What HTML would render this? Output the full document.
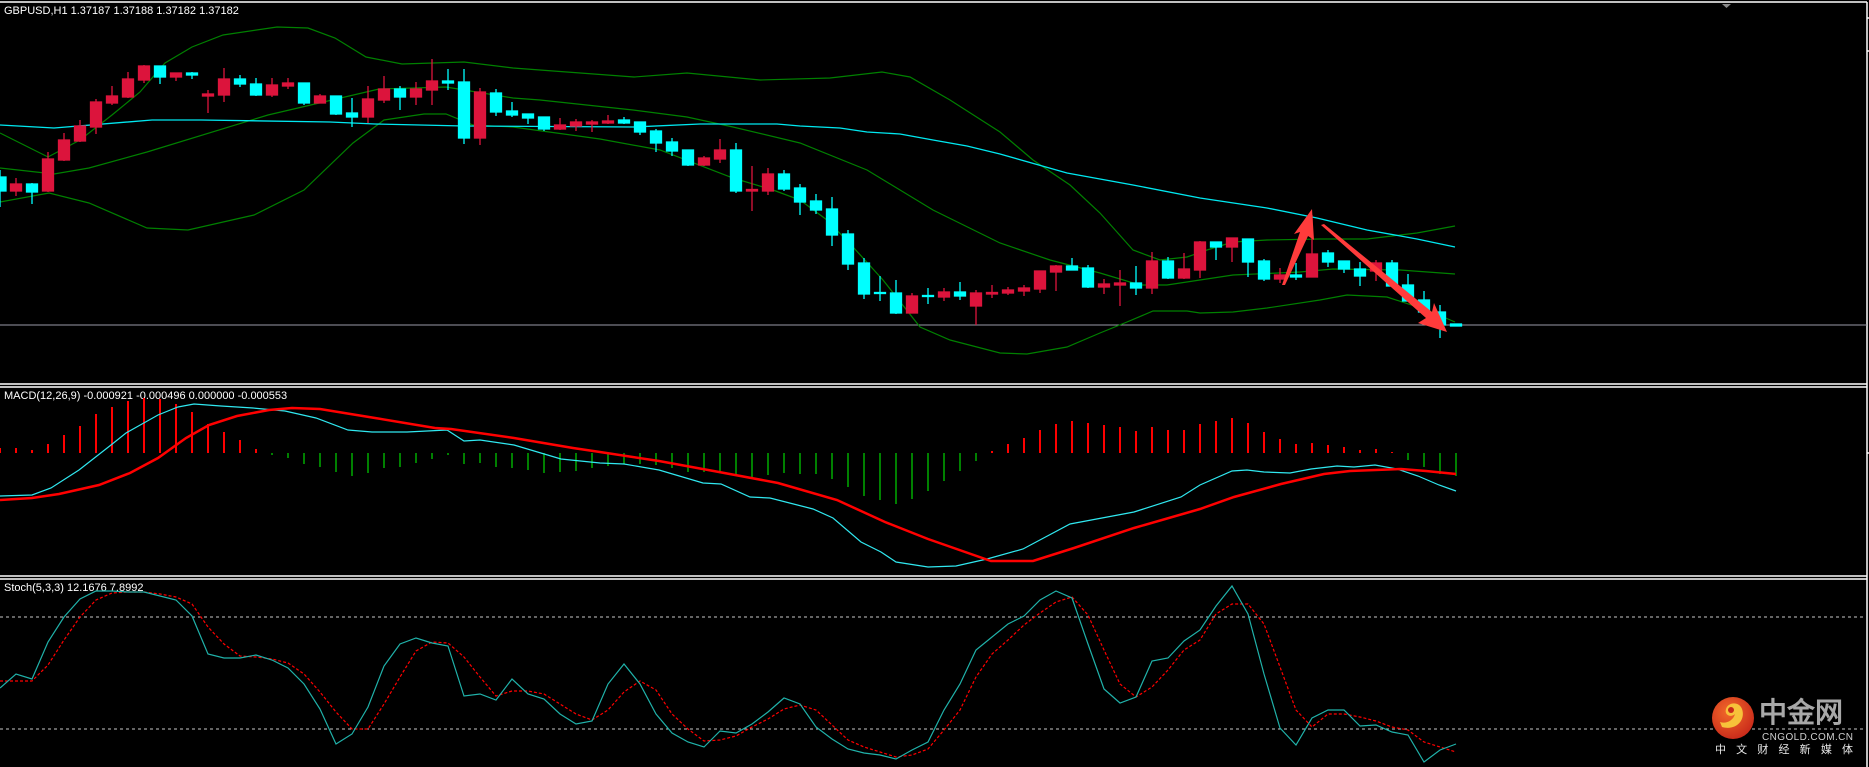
<!DOCTYPE html>
<html><head><meta charset="utf-8"><style>
html,body{margin:0;padding:0;background:#000;}
svg{display:block;}
text{font-family:"Liberation Sans",sans-serif;}
</style></head><body>
<svg width="1869" height="767" viewBox="0 0 1869 767" xmlns="http://www.w3.org/2000/svg">
<rect width="1869" height="767" fill="#000"/>
<g stroke="#fff" stroke-width="1.5" fill="none">
<line x1="0" y1="2" x2="1867" y2="2"/>
<line x1="1867" y1="2" x2="1867" y2="767"/>
<line x1="0" y1="384" x2="1867" y2="384"/>
<line x1="0" y1="387" x2="1867" y2="387"/>
<line x1="0" y1="576" x2="1867" y2="576"/>
<line x1="0" y1="579" x2="1867" y2="579"/>
<line x1="1867" y1="18" x2="1869" y2="18"/>
<line x1="1867" y1="51" x2="1869" y2="51"/>
<line x1="1867" y1="453" x2="1869" y2="453"/>
</g>
<polygon points="1722,4 1731,4 1726.5,8" fill="#888"/>
<text x="4" y="14" font-size="11" fill="#fff">GBPUSD,H1  1.37187 1.37188 1.37182 1.37182</text>
<line x1="0" y1="325" x2="1867" y2="325" stroke="#9a9aa8" stroke-width="1"/>
<g fill="none" stroke="#008000" stroke-width="1.2">
<polyline points="0,133 48,157 80,140 112,115 140,92 165,63 192,47 223,35 277,27 308,28 335,38 366,57 402,64 464,62 513,68 634,77 687,73 760,80 830,78 882,72 910,77 950,100 1000,132 1033,160 1070,185 1100,213 1133,250 1160,260 1187,257 1207,250 1233,242 1267,240 1320,239 1367,239 1417,233 1455,226"/>
<polyline points="0,168 54,174 89,168 147,152 268,115 379,89 446,87 513,98 540,100 633,110 687,117 733,127 800,143 867,170 933,210 1000,243 1050,260 1100,273 1140,285 1167,285 1200,280 1233,275 1300,272 1333,269 1400,270 1455,274"/>
<polyline points="0,202 49,193 89,203 147,228 188,230 254,215 304,190 353,143 384,120 424,114 446,114 473,125 513,127 600,139 660,150 733,178 773,190 800,200 827,220 853,247 883,280 920,327 950,340 1000,353 1027,354 1067,347 1100,333 1127,322 1153,311 1187,311 1200,313 1233,312 1267,308 1320,300 1347,295 1387,297 1427,310 1455,322"/>
</g>
<polyline fill="none" stroke="#00e8f0" stroke-width="1.3" points="0,125 54,128 152,120 201,120 330,122 375,124 464,126 634,127 700,124 777,124 800,126 840,128 867,132 900,134 933,140 967,146 1000,154 1067,173 1133,185 1200,198 1267,208 1317,218 1367,230 1417,239 1455,247"/>
<g stroke-width="1.3">
<g stroke="#00ffff" fill="#00ffff">
<line x1="0" y1="170" x2="0" y2="207"/><rect x="-5" y="177" width="11" height="14"/>
<line x1="32" y1="183" x2="32" y2="204"/><rect x="26.5" y="184" width="11" height="8"/>
<line x1="160" y1="66" x2="160" y2="84"/><rect x="154.5" y="66" width="11" height="11"/>
<line x1="192" y1="72" x2="192" y2="79"/><rect x="186.5" y="73" width="11" height="2"/>
<line x1="240" y1="75" x2="240" y2="87"/><rect x="234.5" y="79" width="11" height="5"/>
<line x1="256" y1="78" x2="256" y2="96"/><rect x="250.5" y="84" width="11" height="11"/>
<line x1="304" y1="83" x2="304" y2="105"/><rect x="298.5" y="83" width="11" height="20"/>
<line x1="336" y1="96" x2="336" y2="115"/><rect x="330.5" y="96" width="11" height="18"/>
<line x1="352" y1="98" x2="352" y2="127"/><rect x="346.5" y="113" width="11" height="4"/>
<line x1="400" y1="86" x2="400" y2="110"/><rect x="394.5" y="89" width="11" height="8"/>
<line x1="448" y1="69" x2="448" y2="90"/><rect x="442.5" y="81" width="11" height="2"/>
<line x1="464" y1="69" x2="464" y2="144"/><rect x="458.5" y="82" width="11" height="56"/>
<line x1="496" y1="89" x2="496" y2="116"/><rect x="490.5" y="93" width="11" height="19"/>
<line x1="512" y1="102" x2="512" y2="117"/><rect x="506.5" y="111" width="11" height="4"/>
<line x1="528" y1="114" x2="528" y2="124"/><rect x="522.5" y="114" width="11" height="4"/>
<line x1="544" y1="117" x2="544" y2="131"/><rect x="538.5" y="117" width="11" height="12"/>
<line x1="624" y1="117" x2="624" y2="124"/><rect x="618.5" y="120" width="11" height="3"/>
<line x1="640" y1="122" x2="640" y2="135"/><rect x="634.5" y="122" width="11" height="10"/>
<line x1="656" y1="129" x2="656" y2="152"/><rect x="650.5" y="131" width="11" height="12"/>
<line x1="672" y1="138" x2="672" y2="156"/><rect x="666.5" y="142" width="11" height="9"/>
<line x1="688" y1="150" x2="688" y2="166"/><rect x="682.5" y="150" width="11" height="15"/>
<line x1="736" y1="143" x2="736" y2="193"/><rect x="730.5" y="150" width="11" height="41"/>
<line x1="784" y1="170" x2="784" y2="191"/><rect x="778.5" y="174" width="11" height="15"/>
<line x1="800" y1="184" x2="800" y2="215"/><rect x="794.5" y="188" width="11" height="14"/>
<line x1="816" y1="194" x2="816" y2="214"/><rect x="810.5" y="201" width="11" height="9"/>
<line x1="832" y1="197" x2="832" y2="246"/><rect x="826.5" y="209" width="11" height="26"/>
<line x1="848" y1="230" x2="848" y2="270"/><rect x="842.5" y="234" width="11" height="30"/>
<line x1="864" y1="258" x2="864" y2="299"/><rect x="858.5" y="263" width="11" height="31"/>
<line x1="880" y1="276" x2="880" y2="301"/><rect x="874.5" y="292.5" width="11" height="1"/>
<line x1="896" y1="280" x2="896" y2="314"/><rect x="890.5" y="293" width="11" height="20"/>
<line x1="928" y1="288" x2="928" y2="304"/><rect x="922.5" y="295.5" width="11" height="1"/>
<line x1="960" y1="282" x2="960" y2="300"/><rect x="954.5" y="292" width="11" height="4"/>
<line x1="1072" y1="258" x2="1072" y2="270"/><rect x="1066.5" y="266" width="11" height="4"/>
<line x1="1088" y1="265" x2="1088" y2="288"/><rect x="1082.5" y="268" width="11" height="19"/>
<line x1="1136" y1="266" x2="1136" y2="295"/><rect x="1130.5" y="283" width="11" height="5"/>
<line x1="1168" y1="257" x2="1168" y2="279"/><rect x="1162.5" y="261" width="11" height="17"/>
<line x1="1216" y1="242" x2="1216" y2="260"/><rect x="1210.5" y="242" width="11" height="5"/>
<line x1="1248" y1="239" x2="1248" y2="277"/><rect x="1242.5" y="239" width="11" height="23"/>
<line x1="1264" y1="259" x2="1264" y2="281"/><rect x="1258.5" y="261" width="11" height="18"/>
<line x1="1296" y1="263" x2="1296" y2="280"/><rect x="1290.5" y="275" width="11" height="2"/>
<line x1="1328" y1="250" x2="1328" y2="267"/><rect x="1322.5" y="253" width="11" height="9"/>
<line x1="1344" y1="261" x2="1344" y2="273"/><rect x="1338.5" y="261" width="11" height="8"/>
<line x1="1360" y1="262" x2="1360" y2="286"/><rect x="1354.5" y="269" width="11" height="7"/>
<line x1="1392" y1="260" x2="1392" y2="286"/><rect x="1386.5" y="263" width="11" height="23"/>
<line x1="1408" y1="274" x2="1408" y2="301"/><rect x="1402.5" y="285" width="11" height="16"/>
<line x1="1424" y1="291" x2="1424" y2="312"/><rect x="1418.5" y="300" width="11" height="12"/>
<line x1="1440" y1="305" x2="1440" y2="338"/><rect x="1434.5" y="312" width="11" height="13"/>
<rect x="1450.5" y="324" width="11" height="2"/>
</g>
<g stroke="#dc143c" fill="#dc143c">
<line x1="16" y1="178" x2="16" y2="196"/><rect x="10.5" y="184" width="11" height="7"/>
<line x1="48" y1="152" x2="48" y2="192"/><rect x="42.5" y="159" width="11" height="32"/>
<line x1="64" y1="133" x2="64" y2="161"/><rect x="58.5" y="140" width="11" height="20"/>
<line x1="80" y1="120" x2="80" y2="142"/><rect x="74.5" y="126" width="11" height="15"/>
<line x1="96" y1="99" x2="96" y2="134"/><rect x="90.5" y="102" width="11" height="25"/>
<line x1="112" y1="86" x2="112" y2="105"/><rect x="106.5" y="96" width="11" height="7"/>
<line x1="128" y1="72" x2="128" y2="98"/><rect x="122.5" y="79" width="11" height="18"/>
<line x1="144" y1="65" x2="144" y2="83"/><rect x="138.5" y="66" width="11" height="14"/>
<line x1="176" y1="73" x2="176" y2="81"/><rect x="170.5" y="73" width="11" height="4"/>
<line x1="208" y1="90" x2="208" y2="113"/><rect x="202.5" y="94" width="11" height="2"/>
<line x1="224" y1="68" x2="224" y2="102"/><rect x="218.5" y="79" width="11" height="16"/>
<line x1="272" y1="78" x2="272" y2="97"/><rect x="266.5" y="85" width="11" height="10"/>
<line x1="288" y1="78" x2="288" y2="89"/><rect x="282.5" y="83" width="11" height="3"/>
<line x1="320" y1="94" x2="320" y2="103"/><rect x="314.5" y="96" width="11" height="7"/>
<line x1="368" y1="86" x2="368" y2="123"/><rect x="362.5" y="99" width="11" height="18"/>
<line x1="384" y1="76" x2="384" y2="103"/><rect x="378.5" y="89" width="11" height="11"/>
<line x1="416" y1="82" x2="416" y2="105"/><rect x="410.5" y="89" width="11" height="8"/>
<line x1="432" y1="59" x2="432" y2="105"/><rect x="426.5" y="81" width="11" height="9"/>
<line x1="480" y1="88" x2="480" y2="145"/><rect x="474.5" y="92" width="11" height="46"/>
<line x1="560" y1="118" x2="560" y2="130"/><rect x="554.5" y="125" width="11" height="4"/>
<line x1="576" y1="119" x2="576" y2="131"/><rect x="570.5" y="122" width="11" height="4"/>
<line x1="592" y1="120" x2="592" y2="132"/><rect x="586.5" y="122" width="11" height="2"/>
<line x1="608" y1="115" x2="608" y2="124"/><rect x="602.5" y="121" width="11" height="2"/>
<line x1="704" y1="156" x2="704" y2="166"/><rect x="698.5" y="158" width="11" height="7"/>
<line x1="720" y1="139" x2="720" y2="163"/><rect x="714.5" y="150" width="11" height="9"/>
<line x1="752" y1="166" x2="752" y2="211"/><rect x="746.5" y="189.5" width="11" height="1.5"/>
<line x1="768" y1="168" x2="768" y2="195"/><rect x="762.5" y="174" width="11" height="17"/>
<line x1="912" y1="293" x2="912" y2="313"/><rect x="906.5" y="296" width="11" height="17"/>
<line x1="944" y1="288" x2="944" y2="301"/><rect x="938.5" y="292" width="11" height="5"/>
<line x1="976" y1="290" x2="976" y2="325"/><rect x="970.5" y="293" width="11" height="13"/>
<line x1="992" y1="285" x2="992" y2="298"/><rect x="986.5" y="292.5" width="11" height="1.5"/>
<line x1="1008" y1="287" x2="1008" y2="295"/><rect x="1002.5" y="290" width="11" height="3"/>
<line x1="1024" y1="285" x2="1024" y2="296"/><rect x="1018.5" y="288" width="11" height="3"/>
<line x1="1040" y1="271" x2="1040" y2="293"/><rect x="1034.5" y="271" width="11" height="18"/>
<line x1="1056" y1="265" x2="1056" y2="291"/><rect x="1050.5" y="266" width="11" height="6"/>
<line x1="1104" y1="279" x2="1104" y2="294"/><rect x="1098.5" y="284" width="11" height="3"/>
<line x1="1120" y1="270" x2="1120" y2="306"/><rect x="1114.5" y="283" width="11" height="2"/>
<line x1="1152" y1="252" x2="1152" y2="294"/><rect x="1146.5" y="261" width="11" height="27"/>
<line x1="1184" y1="253" x2="1184" y2="279"/><rect x="1178.5" y="269" width="11" height="9"/>
<line x1="1200" y1="241" x2="1200" y2="278"/><rect x="1194.5" y="242" width="11" height="28"/>
<line x1="1232" y1="238" x2="1232" y2="262"/><rect x="1226.5" y="238" width="11" height="9"/>
<line x1="1280" y1="268" x2="1280" y2="283"/><rect x="1274.5" y="275" width="11" height="4"/>
<line x1="1312" y1="215" x2="1312" y2="277"/><rect x="1306.5" y="254" width="11" height="23"/>
<line x1="1376" y1="260" x2="1376" y2="281"/><rect x="1370.5" y="263" width="11" height="8"/>
</g>
</g>
<g fill="#ff3b3b">
<polygon points="1282,285 1300,232 1294,234 1312,209 1314,240 1308,236 1285,285"/>
<polygon points="1321,225 1324,224 1432,312 1434,303 1447,332 1418,323 1426,318"/>
</g>
<text x="4" y="399" font-size="11" fill="#fff">MACD(12,26,9) -0.000921 -0.000496 0.000000 -0.000553</text>
<g stroke="#ff0000" stroke-width="2">
<path d="M0 453V448M16 453V448M32 453V450M48 453V444M64 453V435M80 453V426M96 453V414M112 453V407M128 453V401M144 453V398M160 453V399M176 453V404M192 453V412M208 453V424M224 453V432M240 453V440M256 453V449M992 453V451M1008 453V444M1024 453V438M1040 453V430M1056 453V424M1072 453V421M1088 453V423M1104 453V425M1120 453V427M1136 453V431M1152 453V427M1168 453V430M1184 453V430M1200 453V424M1216 453V421M1232 453V418M1248 453V423M1264 453V432M1280 453V439M1296 453V444M1312 453V443M1328 453V445M1344 453V447M1360 453V450M1376 453V449M1392 453V452"/>
</g>
<g stroke="#008000" stroke-width="2">
<path d="M272 453V455M288 453V458M304 453V464M320 453V467M336 453V472M352 453V476M368 453V473M384 453V468M400 453V467M416 453V463M432 453V459M448 453V455M464 453V464M480 453V463M496 453V467M512 453V468M528 453V470M544 453V473M560 453V472M576 453V471M592 453V468M608 453V466M624 453V464M640 453V464M656 453V465M672 453V468M688 453V472M704 453V472M720 453V471M736 453V476M752 453V478M768 453V475M784 453V473M800 453V474M816 453V474M832 453V479M848 453V487M864 453V496M880 453V500M896 453V504M912 453V499M928 453V491M944 453V481M960 453V471M976 453V461M1408 453V460M1424 453V467M1440 453V474M1456 453V476"/>
</g>
<polyline fill="none" stroke="#30e8f0" stroke-width="1.2" points="0,496 32,495 51,488 79,470 111,445 126,433 158,415 178,407 194,404 221,406 253,408 285,411 316,418 348,430 372,432 407,432 447,430 464,441 480,440 514,445 561,459 600,463 624,464 659,470 703,483 721,484 750,497 770,498 813,509 833,518 861,542 881,552 896,562 928,567 956,566 987,559 1023,549 1070,524 1134,512 1181,497 1200,485 1232,471 1247,470 1264,472 1290,473 1311,469 1337,466 1354,467 1375,465 1397,469 1418,476 1439,485 1456,491"/>
<polyline fill="none" stroke="#ff0000" stroke-width="2.5" points="0,500 32,498 59,494 99,485 130,473 158,458 186,438 209,425 237,416 269,410 292,408 320,409 375,418 435,428 451,429 514,438 573,448 600,452 659,461 719,472 778,483 837,500 885,522 928,539 991,561 1033,561 1074,548 1134,528 1200,509 1234,497 1281,484 1324,474 1350,471 1401,469 1426,471 1456,474"/>
<text x="4" y="591" font-size="11" fill="#fff">Stoch(5,3,3) 12.1676 7.8992</text>
<g stroke="#c8c8c8" stroke-width="1" stroke-dasharray="3,3">
<line x1="0" y1="617" x2="1866" y2="617"/>
<line x1="0" y1="729" x2="1866" y2="729"/>
</g>
<polyline fill="none" stroke="#ff0000" stroke-width="1.2" stroke-dasharray="3,2" points="0,681 16,681 32,681 48,665 64,640 80,617 96,600 112,593 128,592 144,592 160,594 176,597 192,604 208,627 224,644 240,656 256,657 272,659 288,663 304,674 320,692 336,712 352,729 368,729 384,704 400,677 416,651 432,642 448,643 464,657 480,677 496,696 512,691 528,691 544,694 560,704 576,714 592,720 608,710 624,692 640,681 656,690 672,714 688,729 704,741 720,740 736,736 752,727 768,719 784,709 800,705 816,710 832,725 848,740 864,747 880,752 896,757 912,755 928,749 944,730 960,710 976,677 992,654 1008,640 1024,625 1040,613 1056,602 1072,597 1088,615 1104,650 1120,684 1136,697 1152,687 1168,670 1184,650 1200,640 1216,614 1232,604 1248,604 1264,624 1280,667 1296,710 1312,727 1328,714 1344,714 1360,717 1376,721 1392,727 1408,730 1424,742 1440,747 1456,752"/>
<polyline fill="none" stroke="#20b2aa" stroke-width="1.2" points="0,688 16,674 32,679 48,642 64,617 80,599 96,591 112,591 128,592 144,592 160,596 176,600 192,616 208,654 224,658 240,658 256,655 272,660 288,668 304,684 320,709 336,744 352,734 368,707 384,666 400,644 416,638 432,643 448,646 464,696 480,694 496,700 512,679 528,694 544,699 560,714 576,724 592,721 608,684 624,664 640,684 656,714 672,733 688,742 704,747 720,731 736,733 752,724 768,712 784,698 800,704 816,727 832,739 848,749 864,753 880,755 896,759 912,750 928,742 944,710 960,684 976,650 992,637 1008,624 1024,616 1040,600 1056,591 1072,598 1088,644 1104,689 1120,703 1136,697 1152,661 1168,658 1184,641 1200,630 1216,606 1232,586 1248,614 1264,674 1280,728 1296,745 1312,718 1328,710 1344,710 1360,726 1376,725 1392,732 1408,735 1424,762 1440,750 1456,744"/>
<defs>
<radialGradient id="lg" cx="0.4" cy="0.35" r="0.7">
<stop offset="0" stop-color="#f26a2a"/><stop offset="1" stop-color="#c8281a"/>
</radialGradient>
</defs>
<circle cx="1733" cy="718" r="21" fill="url(#lg)"/>
<path d="M1722,727 C1736,731 1746,720 1742,709 C1739,701 1728,702 1726,709 C1724,715 1731,718 1735,714 C1733,721 1726,724 1720,722 Z" fill="#f7c23a"/>
<circle cx="1731" cy="710" r="3" fill="#c8281a"/>
<text x="1759" y="722" font-size="28" font-weight="bold" fill="#a8a8a8" font-family="'Liberation Sans','Noto Sans CJK SC',sans-serif">中金网</text>
<text x="1762" y="740" font-size="10" fill="#d0d0d0" textLength="91">CNGOLD.COM.CN</text>
<text x="1715" y="753" font-size="11" fill="#e8e8e8" font-family="'Liberation Sans','Noto Sans CJK SC',sans-serif" textLength="138">中文财经新媒体</text>
</svg>
</body></html>
